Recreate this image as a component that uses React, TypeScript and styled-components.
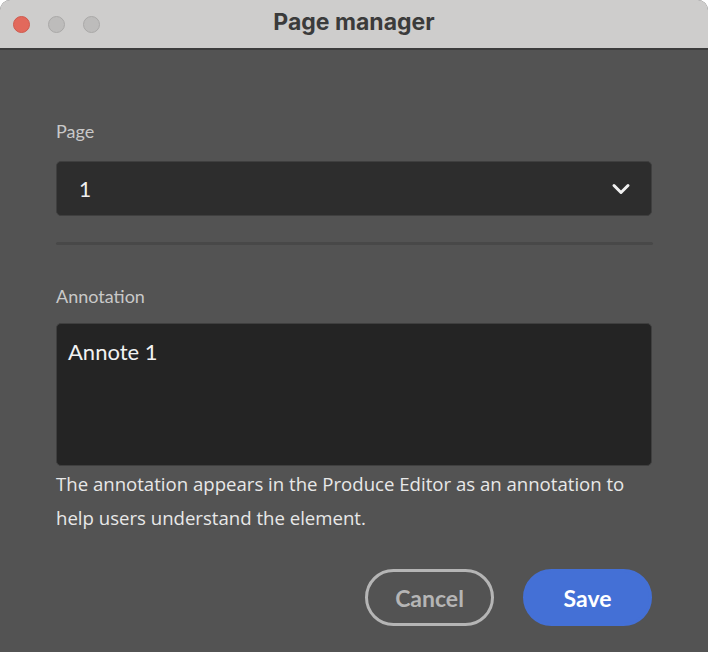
import styled, { createGlobalStyle } from "styled-components";

const GlobalStyle = createGlobalStyle`
  html, body {
    margin: 0;
    padding: 0;
    background: #ffffff;
  }
  * {
    box-sizing: border-box;
  }
`;

const Window = styled.div`
  width: 708px;
  height: 652px;
  display: flex;
  flex-direction: column;
  background: #535353;
  border-radius: 10px 10px 0 0;
  overflow: hidden;
  font-family: Lato, "Open Sans", sans-serif;
`;

const TitleBar = styled.div`
  height: 50px;
  flex-shrink: 0;
  display: flex;
  align-items: center;
  position: relative;
  background: #cecdcc;
  border-bottom: 2px solid #3c3c3c;
  padding-left: 13px;
`;

const Lights = styled.div`
  display: flex;
  gap: 18px;
`;

const Light = styled.span<{ $color: string; $edge: string }>`
  width: 17px;
  height: 17px;
  border-radius: 50%;
  background: ${({ $color }) => $color};
  border: 1px solid ${({ $edge }) => $edge};
`;

const Title = styled.div`
  position: absolute;
  left: 0;
  right: 0;
  top: 0;
  bottom: 0;
  display: flex;
  align-items: center;
  justify-content: center;
  font-family: Inter, "Liberation Sans", sans-serif;
  font-weight: 700;
  font-size: 23px;
  color: #3b3b3b;
  padding-bottom: 5px;
  pointer-events: none;
`;

const Body = styled.div`
  flex: 1;
  display: flex;
  flex-direction: column;
  padding: 70px 56px 0 56px;
`;

const Label = styled.div`
  font-size: 18px;
  color: #c9c9c9;
  line-height: 22px;
`;

const Select = styled.div`
  margin-top: 19px;
  height: 55px;
  width: 596px;
  display: flex;
  align-items: center;
  justify-content: space-between;
  background: #2d2d2d;
  border: 1px solid #3f3f3f;
  border-radius: 5px;
  padding: 0 20px 0 22px;
  color: #f0f0f0;
  font-size: 21px;
`;

const Divider = styled.div`
  margin-top: 26px;
  height: 3px;
  width: 597px;
  background: #484848;
  border-radius: 2px;
`;

const AnnotationLabel = styled(Label)`
  margin-top: 40px;
`;

const TextArea = styled.div`
  margin-top: 16px;
  height: 143px;
  width: 596px;
  background: #242424;
  border: 1px solid #3f3f3f;
  border-radius: 5px;
  padding: 14px 11px;
  color: #f2f2f2;
  font-size: 22px;
  line-height: 28px;
`;

const Help = styled.p`
  margin: 1px 0 0 0;
  font-family: "Open Sans", Lato, sans-serif;
  font-size: 18.6px;
  line-height: 34px;
  color: #e8e8e8;
  white-space: nowrap;
`;

const Actions = styled.div`
  margin-top: 34px;
  display: flex;
  justify-content: flex-end;
  gap: 29px;
  width: 596px;
`;

const Button = styled.button<{ $primary?: boolean }>`
  height: 57px;
  width: 129px;
  border-radius: 29px;
  font-family: Lato, "Open Sans", sans-serif;
  font-weight: 700;
  font-size: 23px;
  cursor: pointer;
  border: 3px solid ${({ $primary }) => ($primary ? "#4470d6" : "#b5b5b5")};
  background: ${({ $primary }) => ($primary ? "#4470d6" : "transparent")};
  color: ${({ $primary }) => ($primary ? "#ffffff" : "#b5b5b5")};
`;

const Chevron = () => (
  <svg width="20" height="14" viewBox="0 0 20 14" fill="none">
    <path d="M3 3.5 L10 10.5 L17 3.5" stroke="#f0f0f0" strokeWidth="3" strokeLinecap="round" strokeLinejoin="round" />
  </svg>
);

const App = () => {
  return (
    <>
      <GlobalStyle />
      <Window>
        <TitleBar>
          <Lights>
            <Light $color="#e2695c" $edge="#cf5a4e" />
            <Light $color="#bdbcbb" $edge="#aaa9a8" />
            <Light $color="#bdbcbb" $edge="#aaa9a8" />
          </Lights>
          <Title>Page manager</Title>
        </TitleBar>
        <Body>
          <Label>Page</Label>
          <Select>
            <span>1</span>
            <Chevron />
          </Select>
          <Divider />
          <AnnotationLabel>Annotation</AnnotationLabel>
          <TextArea>Annote 1</TextArea>
          <Help>
            The annotation appears in the Produce Editor as an annotation to
            <br />
            help users understand the element.
          </Help>
          <Actions>
            <Button>Cancel</Button>
            <Button $primary>Save</Button>
          </Actions>
        </Body>
      </Window>
    </>
  );
};

export default App;
